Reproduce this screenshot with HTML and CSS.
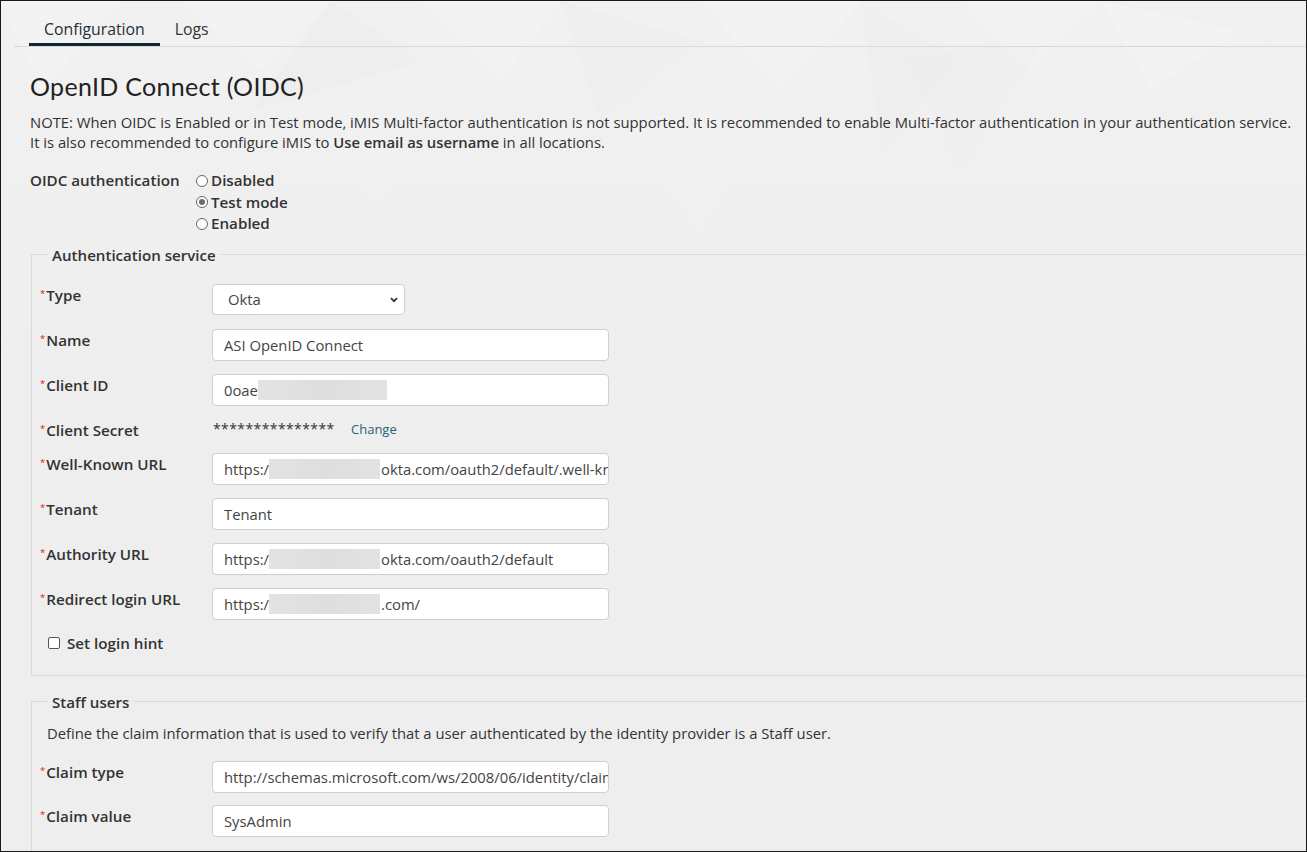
FILE: index.html
```html
<!DOCTYPE html>
<html lang="en">
<head>
<meta charset="utf-8">
<title>OpenID Connect (OIDC)</title>
<link rel="stylesheet" href="styles.css">
</head>
<body>
<div class="frame">
  <svg class="pattern" width="1307" height="300" viewBox="0 0 1307 300" aria-hidden="true">
    <polygon points="0,0 120,0 40,90" fill="#ffffff" opacity="0.18"/>
    <polygon points="180,0 330,0 260,70" fill="#ffffff" opacity="0.15"/>
    <polygon points="330,0 420,60 250,110" fill="#e6e6e6" opacity="0.2"/>
    <polygon points="420,0 560,0 500,80" fill="#ffffff" opacity="0.18"/>
    <polygon points="560,0 700,40 600,120" fill="#e8e8e8" opacity="0.18"/>
    <polygon points="700,0 860,0 780,90" fill="#ffffff" opacity="0.18"/>
    <polygon points="860,0 960,60 880,150" fill="#e7e7e7" opacity="0.18"/>
    <polygon points="960,0 1100,0 1030,70" fill="#ffffff" opacity="0.18"/>
    <polygon points="900,50 1040,45 960,170" fill="#e9e9e9" opacity="0.2"/>
    <polygon points="1100,0 1240,30 1150,90" fill="#ffffff" opacity="0.15"/>
    <polygon points="80,90 200,60 150,180" fill="#ffffff" opacity="0.12"/>
    <polygon points="300,110 420,90 380,200" fill="#ffffff" opacity="0.1"/>
    <polygon points="620,120 760,100 700,230" fill="#ffffff" opacity="0.1"/>
  </svg>

  <nav class="tabbar">
    <span class="tab active">Configuration</span>
    <span class="tab">Logs</span>
  </nav>

  <main class="content">
    <h1 class="title">OpenID Connect (OIDC)</h1>
    <p class="note">NOTE: When OIDC is Enabled or in Test mode, iMIS Multi-factor authentication is not supported. It is recommended to enable Multi-factor authentication in your authentication service.<br>It is also recommended to configure iMIS to <strong>Use email as username</strong> in all locations.</p>

    <div class="auth-row">
      <span class="auth-label">OIDC authentication</span>
      <div class="radios">
        <label class="radio-item"><span class="radio"></span>Disabled</label>
        <label class="radio-item"><span class="radio checked"></span>Test mode</label>
        <label class="radio-item"><span class="radio"></span>Enabled</label>
      </div>
    </div>

    <fieldset class="group">
      <legend>Authentication service</legend>
      <div class="rows">
        <div class="row">
          <span class="label"><span class="req">*</span>Type</span>
          <div class="select">
            <span class="select-text">Okta</span>
            <svg class="chev" width="8" height="6" viewBox="0 0 8 6"><path d="M1 1.2 L4 4.2 L7 1.2" fill="none" stroke="#333" stroke-width="1.8"/></svg>
          </div>
        </div>
        <div class="row">
          <span class="label"><span class="req">*</span>Name</span>
          <div class="input">ASI OpenID Connect</div>
        </div>
        <div class="row">
          <span class="label"><span class="req">*</span>Client ID</span>
          <div class="input">0oae<span class="blur b-client"></span></div>
        </div>
        <div class="row short">
          <span class="label"><span class="req">*</span>Client Secret</span>
          <div class="secret"><span class="stars">***************</span><a class="change">Change</a></div>
        </div>
        <div class="row">
          <span class="label"><span class="req">*</span>Well-Known URL</span>
          <div class="input">https:/<span class="blur b-url"></span>okta.com/oauth2/default/.well-known/openid-configuration</div>
        </div>
        <div class="row">
          <span class="label"><span class="req">*</span>Tenant</span>
          <div class="input">Tenant</div>
        </div>
        <div class="row">
          <span class="label"><span class="req">*</span>Authority URL</span>
          <div class="input">https:/<span class="blur b-url"></span>okta.com/oauth2/default</div>
        </div>
        <div class="row">
          <span class="label"><span class="req">*</span>Redirect login URL</span>
          <div class="input">https:/<span class="blur b-url"></span>.com/</div>
        </div>
        <div class="row short check-row">
          <label class="check-item"><span class="checkbox"></span>Set login hint</label>
        </div>
      </div>
    </fieldset>

    <fieldset class="group staff">
      <legend>Staff users</legend>
      <p class="desc">Define the claim information that is used to verify that a user authenticated by the identity provider is a Staff user.</p>
      <div class="rows tight">
        <div class="row">
          <span class="label"><span class="req">*</span>Claim type</span>
          <div class="input">http://schemas.microsoft.com/ws/2008/06/identity/claims/role</div>
        </div>
        <div class="row">
          <span class="label"><span class="req">*</span>Claim value</span>
          <div class="input">SysAdmin</div>
        </div>
      </div>
    </fieldset>
  </main>
</div>
</body>
</html>
```

FILE: styles.css
```css
* { box-sizing: border-box; }
html, body { margin: 0; padding: 0; }
body {
  font-family: "Open Sans", "Liberation Sans", sans-serif;
  font-size: 14.8px;
  color: #333;
  background: #eeeeee;
}
.frame {
  position: relative;
  width: 1307px;
  height: 852px;
  border: 1px solid #1a1a1a;
  background: linear-gradient(#f1f1f1 0, #efefef 260px, #eeeeee 400px);
  overflow: hidden;
}
.pattern {
  position: absolute;
  left: 0;
  top: 0;
  pointer-events: none;
}
.tabbar {
  position: relative;
  display: flex;
  margin-left: 13px;
  padding: 18px 0 0 15px;
  border-bottom: 1px solid #d9d9d9;
}
.tab {
  font-size: 15.8px;
  line-height: 20px;
  color: #333;
  padding: 0 15px 4px;
  border-bottom: 3px solid transparent;
}
.tab.active {
  color: #1f2f38;
  border-bottom-color: #0f2733;
}
.content {
  position: relative;
  padding: 0 0 0 29px;
}
.title {
  margin: 22px 0 0;
  font-family: Lato, "Open Sans", sans-serif;
  font-weight: 400;
  font-size: 25px;
  line-height: 34px;
  color: #222;
  letter-spacing: 0.3px;
}
.note {
  margin: 9px 0 0;
  line-height: 20px;
  color: #333;
  padding-right: 10px;
  white-space: nowrap;
}
.note strong { font-weight: 600; }
.auth-row {
  display: flex;
  margin-top: 18px;
}
.auth-label {
  width: 166px;
  font-size: 15.2px;
  font-weight: 600;
  line-height: 21px;
}
.radios {
  display: flex;
  flex-direction: column;
}
.radio-item {
  display: flex;
  align-items: center;
  font-size: 15.2px;
  line-height: 21.5px;
  font-weight: 600;
}
.radio {
  width: 12px;
  height: 12px;
  border: 1px solid #666;
  border-radius: 50%;
  background: #fff;
  margin-right: 3px;
  position: relative;
}
.radio.checked::after {
  content: "";
  position: absolute;
  left: 2px;
  top: 2px;
  width: 6px;
  height: 6px;
  border-radius: 50%;
  background: #6b6b6b;
}
.group {
  margin: 10px -20px 0 1px;
  padding: 0 0 22px 8px;
  border: 1px solid #d9d9d9;
  min-width: 0;
}
.group legend {
  margin-left: 7px;
  padding: 0 5px;
  font-size: 15.1px;
  font-weight: 600;
  line-height: 20px;
  color: #333;
}
.rows {
  display: flex;
  flex-direction: column;
  gap: 13px;
  padding-top: 19px;
}
.rows.tight { gap: 12px; padding-top: 18px; }
.row {
  display: flex;
  align-items: flex-start;
  min-height: 32px;
}
.row.short { min-height: 20px; }
.label {
  width: 172px;
  flex: none;
  font-size: 15.2px;
  font-weight: 600;
  line-height: 20px;
  color: #333;
}
.req {
  color: #e0161b;
  font-size: 9.5px;
  font-weight: 400;
  vertical-align: 4px;
  margin-right: 1px;
}
.input {
  width: 397px;
  height: 32px;
  background: #fff;
  border: 1px solid #cfcfcf;
  border-radius: 4px;
  padding: 0 11px;
  font-size: 14.8px;
  line-height: 30px;
  color: #444;
  white-space: nowrap;
  overflow: hidden;
  display: flex;
  align-items: center;
}
.blur {
  display: inline-block;
  height: 20px;
  background: linear-gradient(90deg, #e3e3e3, #dedede 50%, #e2e2e2);
  flex: none;
}
.b-client { width: 129px; }
.b-url { width: 111px; margin-right: 1px; }
.select {
  position: relative;
  width: 193px;
  height: 31px;
  background: #fff;
  border: 1px solid #cfcfcf;
  border-radius: 4px;
  padding: 0 15px;
  font-size: 14.8px;
  line-height: 29px;
  color: #444;
}
.chev {
  position: absolute;
  right: 6px;
  top: 12px;
}
.secret {
  display: flex;
  align-items: center;
  line-height: 20px;
  padding-left: 1px;
}
.stars {
  font-size: 14px;
  letter-spacing: 0.4px;
  color: #333;
  width: 138px;
}
.change {
  font-size: 13px;
  color: #2f5d7a;
  cursor: pointer;
}
.check-row { padding-left: 8px; }
.check-item {
  display: flex;
  align-items: center;
  font-size: 15.2px;
  font-weight: 600;
  line-height: 20px;
}
.checkbox {
  width: 12px;
  height: 12px;
  border: 1px solid #555;
  border-radius: 2px;
  background: #fff;
  margin-right: 7px;
}
.staff { margin-top: 16px; }
.desc {
  margin: 11px 0 0 7px;
  line-height: 20px;
  color: #333;
}
```
